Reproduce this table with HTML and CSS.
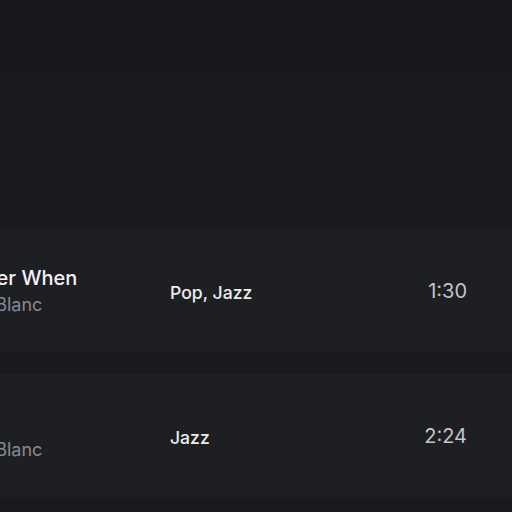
FILE: index.html
```html
<!DOCTYPE html>
<html>
<head>
<meta charset="utf-8">
<link rel="stylesheet" href="styles.css">
</head>
<body>
<div class="page">
  <div class="topbar"></div>
  <div class="list">
    <div class="row">
      <div class="track">
        <div class="title">Never When</div>
        <div class="artist">Mel Blanc</div>
      </div>
      <div class="genre">Pop, Jazz</div>
      <div class="duration">1:30</div>
    </div>
    <div class="row">
      <div class="track">
        <div class="title">Hey</div>
        <div class="artist">Mel Blanc</div>
      </div>
      <div class="genre">Jazz</div>
      <div class="duration">2:24</div>
    </div>
  </div>
</div>
</body>
</html>
```

FILE: styles.css
```css
html, body {
  margin: 0;
  padding: 0;
  background: #18191c;
  overflow: hidden;
}
body {
  font-family: Inter, "Noto Sans", sans-serif;
  width: 512px;
  height: 512px;
}
.page {
  display: flex;
  flex-direction: column;
}
.topbar {
  height: 70px;
  background: #17181b;
}
.list {
  background: #191a1d;
  padding-top: 159px;
  padding-bottom: 14px;
  display: flex;
  flex-direction: column;
  gap: 22px;
  margin-left: -64px;
}
.row {
  height: 123px;
  background: #1e1f23;
  display: grid;
  grid-template-columns: 211px 1fr auto;
  align-items: center;
  padding-left: 23px;
  padding-right: 45px;
}
.track {
  display: flex;
  flex-direction: column;
  gap: 4px;
}
.title {
  font-size: 20px;
  font-weight: 500;
  color: #f2f2f4;
  line-height: 24px;
}
.artist {
  font-size: 18px;
  color: #88898e;
  line-height: 22px;
}
.genre {
  font-size: 17.6px;
  font-weight: 500;
  color: #ededef;
  padding-top: 3px;
}
.duration {
  font-size: 20px;
  color: #c3c4c8;
  padding-top: 1px;
}
```
